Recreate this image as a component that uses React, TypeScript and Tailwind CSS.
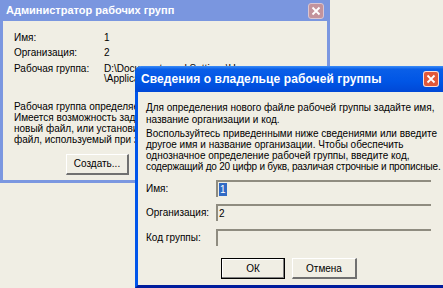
const font = "font-['Liberation_Sans',Arial,sans-serif]";

// classic 3D push button
const Btn = ({ label, def, w }: { label: string; def?: boolean; w: string }) => (
  <div
    className={`${w} h-[21px] flex items-center justify-center bg-[#f0eee4] text-[10px] text-black ${
      def
        ? "border border-black shadow-[inset_-1px_-1px_0_#808080,inset_1px_1px_0_#fff]"
        : "border-t border-l border-t-white border-l-white border-b-2 border-r-2 border-b-[#707070] border-r-[#707070]"
    }`}
  >
    {label}
  </div>
);

const Field = ({ children }: { children?: React.ReactNode }) => (
  <div className="w-[215px] h-[17px] border-t-2 border-l-2 border-t-[#8f8c80] border-l-[#8f8c80] flex items-center pl-[1px] text-[10px]">
    {children}
  </div>
);

const CloseBtn = ({ active }: { active?: boolean }) => (
  <div
    className={`w-[16px] h-[16px] rounded-[3px] flex items-center justify-center border ${
      active ? "bg-[#e1583a] border-white/80" : "bg-[#c3939c] border-[#d9c5d2]"
    }`}
  >
    <svg width="10" height="10" viewBox="0 0 10 10">
      <path d="M1.5 1.5 L8.5 8.5 M8.5 1.5 L1.5 8.5" stroke="white" strokeWidth="1.8" />
    </svg>
  </div>
);

export default function App() {
  return (
    <div className={`relative w-[443px] h-[288px] overflow-hidden bg-[#f0eee4] text-black ${font}`}>
      {/* inactive window: Администратор рабочих групп */}
      <div className="absolute left-0 top-0 w-[330px] h-[183px] flex flex-col border-l-[3px] border-r-[3px] border-b-[3px] border-[#7b97e0] bg-[#f0eee4]">
        <div className="h-[21px] -mx-[3px] px-[6px] flex items-center justify-between bg-[#7a96df]">
          <span className="text-[11px] font-bold text-white">Администратор рабочих групп</span>
          <CloseBtn />
        </div>
        <div className="pl-[11px] pt-[11px] text-[10px] leading-[12px] whitespace-nowrap">
          <div className="flex h-[15px]">
            <span className="w-[90px]">Имя:</span>
            <span>1</span>
          </div>
          <div className="flex h-[17px]">
            <span className="w-[90px]">Организация:</span>
            <span>2</span>
          </div>
          <div className="flex leading-[10px]">
            <span className="w-[90px]">Рабочая группа:</span>
            <div>
              <div>D:\Documents and Settings\User</div>
              <div>\Application Data\Microsoft\Access\System.mdw</div>
            </div>
          </div>
          <div className="mt-[17px] leading-[11px]">
            <div>Рабочая группа определяется файлом сведений при запуске.</div>
            <div>Имеется возможность задать</div>
            <div>новый файл, или установить связь с</div>
            <div>файл, используемый при запуске.</div>
          </div>
          <div className="mt-[9px] ml-[52px]">
            <Btn label="Создать..." w="w-[63px]" />
          </div>
        </div>
      </div>

      {/* active window: Сведения о владельце рабочей группы */}
      <div className="absolute left-[135px] top-[66px] w-[312px] h-[222px] flex flex-col border-l-[3px] border-[#0055ea] border-b-[3px] border-b-[#001c9c] bg-[#f0eee4] rounded-tl-[6px]">
        <div className="h-[26px] -ml-[3px] pl-[6px] pr-[8px] flex items-center justify-between rounded-tl-[6px] bg-[linear-gradient(#3d8df7_0%,#0a5fe8_12%,#0055e5_60%,#0048d6_100%)]">
          <span className="text-[12px] font-bold text-white tracking-[0.1px]">Сведения о владельце рабочей группы</span>
          <CloseBtn active />
        </div>
        <div className="pl-[8px] pt-[10px] text-[10px] whitespace-nowrap">
          <div className="leading-[12px]">
            <div>Для определения нового файле рабочей группы задайте имя,</div>
            <div>название организации и код.</div>
          </div>
          <div className="mt-[2px] leading-[11px]">
            <div>Воспользуйтесь приведенными ниже сведениями или введите</div>
            <div>другое имя и название организации. Чтобы обеспечить</div>
            <div>однозначное определение рабочей группы, введите код,</div>
            <div className="tracking-[-0.2px]">содержащий до 20 цифр и букв, различая строчные и прописные.</div>
          </div>
          <div className="mt-[8px] flex flex-col gap-[7px]">
            <div className="flex items-center">
              <span className="w-[70px]">Имя:</span>
              <Field>
                <span className="bg-[#316ac5] text-white px-[1px] leading-[13px]">1</span>
              </Field>
            </div>
            <div className="flex items-center">
              <span className="w-[70px]">Организация:</span>
              <Field>2</Field>
            </div>
            <div className="flex items-center mt-[1px]">
              <span className="w-[70px]">Код группы:</span>
              <Field />
            </div>
          </div>
          <div className="mt-[12px] ml-[75px] flex gap-[7px]">
            <Btn label="ОК" def w="w-[64px]" />
            <Btn label="Отмена" w="w-[65px]" />
          </div>
        </div>
      </div>
    </div>
  );
}
